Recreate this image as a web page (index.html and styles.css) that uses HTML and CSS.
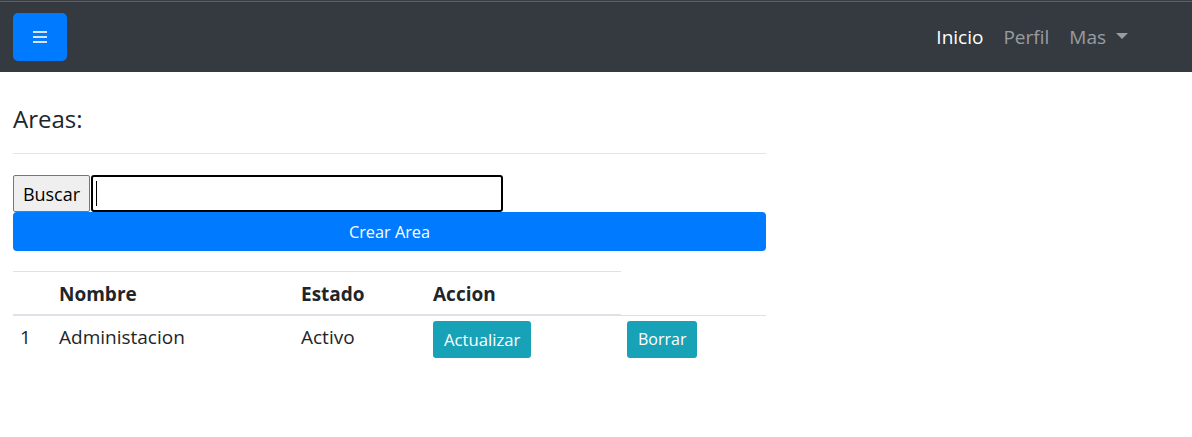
FILE: index.html
```html
<!DOCTYPE html>
<html lang="es">
<head>
<meta charset="utf-8">
<title>Areas</title>
<link rel="stylesheet" href="styles.css">
</head>
<body>
<nav class="navbar">
  <button class="toggler" type="button" aria-label="Menu">
    <svg width="16" height="14" viewBox="0 0 16 14" aria-hidden="true">
      <rect x="1" y="1" width="14" height="2" fill="currentColor"/>
      <rect x="1" y="6" width="14" height="2" fill="currentColor"/>
      <rect x="1" y="11" width="14" height="2" fill="currentColor"/>
    </svg>
  </button>
  <ul class="nav">
    <li><a class="nav-link active" href="#">Inicio</a></li>
    <li><a class="nav-link" href="#">Perfil</a></li>
    <li><a class="nav-link dropdown" href="#">Mas <span class="caret"></span></a></li>
  </ul>
</nav>
<main class="content">
  <h4 class="title">Areas:</h4>
  <hr class="divider">
  <div class="search">
    <button class="btn-search" type="button">Buscar</button>
    <span class="search-field"><input class="search-input" type="text"><span class="text-caret"></span></span>
  </div>
  <button class="btn-create" type="button">Crear Area</button>
  <table class="table">
    <colgroup>
      <col class="c1"><col class="c2"><col class="c3"><col class="c4"><col class="c5">
    </colgroup>
    <thead>
      <tr><th></th><th>Nombre</th><th>Estado</th><th>Accion</th></tr>
    </thead>
    <tbody>
      <tr>
        <td class="num">1</td>
        <td class="txt">Administacion</td>
        <td class="txt">Activo</td>
        <td class="act"><button class="btn-info" type="button">Actualizar</button></td>
        <td class="act last"><button class="btn-info" type="button">Borrar</button></td>
      </tr>
    </tbody>
  </table>
</main>
</body>
</html>
```
FILE: styles.css
```css
* { box-sizing: border-box; }
html, body { margin: 0; padding: 0; }
body {
  font-family: "Open Sans", "Noto Sans", sans-serif;
  color: #212529;
  background: #fff;
}
.navbar {
  height: 72px;
  background: #343a40;
  box-shadow: inset 0 1px 0 #3a3d40, inset 0 2px 0 #5d6063;
  display: flex;
  align-items: center;
  justify-content: space-between;
  padding: 2px 54px 0 13px;
}
.toggler {
  width: 54px;
  height: 48px;
  border: 0;
  border-radius: 5px;
  background: #007bff;
  color: rgba(235, 240, 255, 0.9);
  display: flex;
  align-items: center;
  justify-content: center;
  padding: 0;
}
.toggler svg { display: block; }
.nav {
  list-style: none;
  display: flex;
  margin: 0;
  padding: 0;
}
.nav-link {
  display: flex;
  align-items: center;
  padding: 0 10px;
  font-size: 19px;
  line-height: 26px;
  color: rgba(255, 255, 255, 0.5);
  text-decoration: none;
}
.nav-link.active { color: #fff; }
.caret {
  display: inline-block;
  width: 0;
  height: 0;
  margin-left: 10px;
  border-top: 6px solid rgba(255, 255, 255, 0.5);
  border-left: 6px solid transparent;
  border-right: 6px solid transparent;
  margin-top: -2px;
}
.content {
  width: 779px;
  padding: 0 13px;
}
.title {
  margin: 32px 0 0;
  font-size: 24px;
  line-height: 29px;
  font-weight: 500;
}
.divider {
  margin: 20px 0 0;
  border: 0;
  border-top: 1px solid rgba(0, 0, 0, 0.1);
}
.search {
  display: flex;
  margin-top: 21px;
  height: 37px;
}
.btn-search {
  width: 77px;
  height: 37px;
  background: #efefef;
  border: 1px solid #767676;
  border-radius: 2px;
  font-family: inherit;
  font-size: 18px;
  color: #000;
  padding: 0;
}
.search-field {
  position: relative;
  display: block;
  margin-left: 1px;
}
.search-input {
  display: block;
  width: 412px;
  height: 37px;
  border: 2px solid #000;
  border-radius: 3px;
  outline: none;
  font-family: inherit;
  font-size: 18px;
}
.text-caret {
  position: absolute;
  left: 5px;
  top: 6px;
  width: 1px;
  height: 25px;
  background: #000;
}
.btn-create {
  display: block;
  width: 753px;
  height: 39px;
  border: 0;
  border-radius: 4px;
  background: #007bff;
  color: #fff;
  font-family: inherit;
  font-size: 16.3px;
  padding: 0;
}
.table {
  width: 753px;
  margin-top: 20px;
  border-collapse: collapse;
  table-layout: fixed;
  font-size: 19px;
}
.c1 { width: 34px; }
.c2 { width: 242px; }
.c3 { width: 132px; }
.c4 { width: 200px; }
.c5 { width: 145px; }
.table th {
  text-align: left;
  font-weight: 700;
  padding: 11px 12px 9px;
  line-height: 22px;
  border-top: 1px solid #dee2e6;
  border-bottom: 2px solid #dee2e6;
}
.table td {
  border-top: 1px solid #dee2e6;
  vertical-align: top;
  padding: 9px 12px 0;
  line-height: 24px;
  height: 48px;
}
.table td.num { padding-left: 7px; }
.table td.act { padding-top: 5px; }
.table td.last { padding-left: 6px; }
.btn-info {
  height: 37px;
  padding: 0 11px;
  border: 0;
  border-radius: 3px;
  background: #17a2b8;
  color: #fff;
  font-family: inherit;
  font-size: 16.7px;
}
.btn-info:last-child { }
.last .btn-info { font-size: 16px; }
```
